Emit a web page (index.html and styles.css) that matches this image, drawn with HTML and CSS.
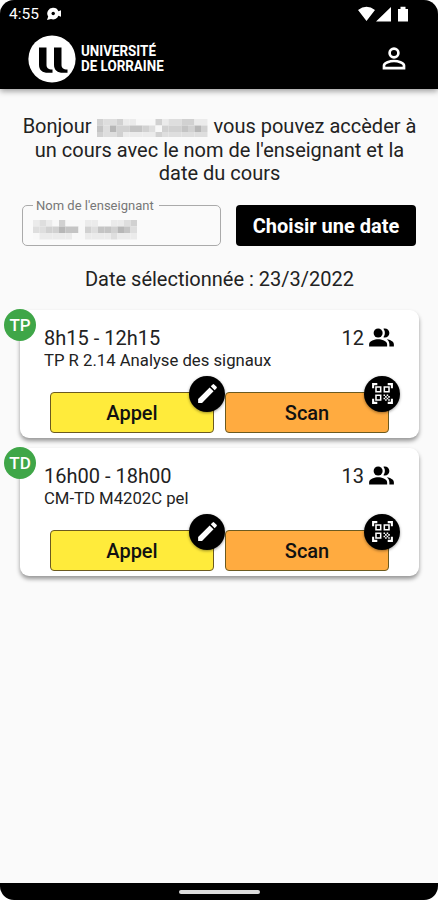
FILE: index.html
```html
<!DOCTYPE html>
<html lang="fr">
<head>
  <meta charset="UTF-8" />
  <meta name="viewport" content="width=device-width, initial-scale=1.0" />
  <title>Université de Lorraine</title>
  <link rel="stylesheet" href="styles.css">
</head>
<body>
  <!-- shared icons -->
  <svg class="defs" width="0" height="0">
    <symbol id="group" viewBox="0 0 24 24">
      <circle cx="9" cy="8" r="4"/>
      <path d="M9 13.500c-3 0-8 1.300-8 4.500v2h16v-2c0-3.200-5-4.500-8-4.500zM15 12c2.200 0 4-1.800 4-4s-1.800-4-4-4c-.5 0-.9.100-1.300.200A6 6 0 0 1 15 8a6 6 0 0 1-1.300 3.800c.4.100.8.200 1.300.200zM16.700 13.600C18 14.600 19 16 19 18v2h4v-2c0-2.500-3.300-3.900-6.300-4.400z"/>
    </symbol>
    <symbol id="edit" viewBox="0 0 24 24">
      <path d="M3 17.250V21h3.750L17.810 9.940l-3.750-3.750L3 17.250zM20.710 7.040a1 1 0 0 0 0-1.410l-2.340-2.340a1 1 0 0 0-1.410 0l-1.830 1.830 3.750 3.750 1.830-1.830z"/>
    </symbol>
    <symbol id="qr" viewBox="0 0 24 24">
      <path d="M9.500 6.500v3h-3v-3h3M11 5H5v6h6V5zM9.500 14.500v3h-3v-3h3M11 13H5v6h6v-6zM17.500 6.500v3h-3v-3h3M19 5h-6v6h6V5zM13 13h1.500v1.500H13V13zM14.500 14.500H16V16h-1.500v-1.500zM16 13h1.500v1.500H16V13zM13 16h1.500v1.500H13V16zM14.500 17.500H16V19h-1.500v-1.500zM16 16h1.500v1.500H16V16zM17.500 14.500H19V16h-1.500v-1.500zM17.500 17.500H19V19h-1.500v-1.500zM22 7h-2V4h-3V2h5v5zM22 22v-5h-2v3h-3v2h5zM2 22h5v-2H4v-3H2v5zM2 2v5h2V4h3V2H2z"/>
    </symbol>
  </svg>

  <div class="phone">
    <header class="header">
      <div class="status">
        <span>4:55</span>
        <svg class="notif" width="17" height="14" viewBox="0 0 17 14">
          <path d="M7 .8a5.600 5.600 0 0 1 5.400 3.400l2.600-1v6.600l-2.600-1A5.600 5.600 0 0 1 5 12l-4 1 1.200-3.500A5.600 5.600 0 0 1 7 .8z" fill="#fff"/>
          <circle cx="7.200" cy="6.500" r="1.700"/>
        </svg>
        <svg class="signals" width="52" height="17" viewBox="0 0 52 17">
          <path d="M0 4Q8.500-2.500 17 4L8.500 15zM18 15.500L33 1v14.500zM40 3h2.500V.8h5V3H50v12.500H40z" fill="#fff"/>
        </svg>
      </div>
      <div class="toolbar">
        <svg class="logo" width="48" height="48" viewBox="0 0 48 48">
          <circle cx="24" cy="24" r="23.600" fill="#fff"/>
          <path d="M11 12.500h7.500v17c0 3.500 1.500 5 6 5v3.200h-4.500c-5.500 0-9-2.500-9-8zM26 12.500h7.500v17c0 3.500 1.500 5 6 5v3.200H35c-5.500 0-9-2.500-9-8z"/>
        </svg>
        <div class="brand"><span>UNIVERSITÉ</span><span>DE LORRAINE</span></div>
        <svg class="user" width="32" height="32" viewBox="0 0 24 24" fill="none" stroke="#fff" stroke-width="2">
          <circle cx="12" cy="7.500" r="3.300"/>
          <path d="M4.500 18.900v-2c0-2 4.500-3.400 7.500-3.400s7.500 1.400 7.500 3.400v2z"/>
        </svg>
      </div>
    </header>

    <main>
      <p class="intro">Bonjour <svg class="masked" id="name" width="112" height="18"></svg> vous pouvez accèder à<br>un cours avec le nom de l'enseignant et la<br>date du cours</p>

      <div class="search">
        <fieldset class="field">
          <legend>Nom de l'enseignant</legend>
          <svg class="value" id="teacher" width="105" height="20"></svg>
        </fieldset>
        <button class="date-btn">Choisir une date</button>
      </div>

      <p class="selected">Date sélectionnée : 23/3/2022</p>

      <section class="card">
        <span class="tag">TP</span>
        <div class="info">
          <span class="hours">8h15 - 12h15</span>
          <span class="count">12 <svg class="group"><use href="#group"/></svg></span>
        </div>
        <div class="course">TP R 2.14 Analyse des signaux</div>
        <div class="actions">
          <button class="action appel">Appel<span class="round"><svg><use href="#edit"/></svg></span></button>
          <button class="action scan">Scan<span class="round"><svg><use href="#qr"/></svg></span></button>
        </div>
      </section>

      <section class="card">
        <span class="tag">TD</span>
        <div class="info">
          <span class="hours">16h00 - 18h00</span>
          <span class="count">13 <svg class="group"><use href="#group"/></svg></span>
        </div>
        <div class="course">CM-TD M4202C pel</div>
        <div class="actions">
          <button class="action appel">Appel<span class="round"><svg><use href="#edit"/></svg></span></button>
          <button class="action scan">Scan<span class="round"><svg><use href="#qr"/></svg></span></button>
        </div>
      </section>
    </main>

    <footer class="navbar"><div class="handle"></div></footer>
  </div>

  <script src="script.js"></script>
</body>
</html>
```

FILE: styles.css
```css
* {
  box-sizing: border-box;
}
body {
  margin: 0;
  background: #fff;
  font-family: Roboto, "Liberation Sans", sans-serif;
  color: #222;
}
.defs {
  position: absolute;
}
.phone {
  display: flex;
  flex-direction: column;
  height: 900px;
  background: #fafafa;
  border-radius: 14px;
  overflow: hidden;
}
.header {
  height: 89px;
  background: #000;
  color: #fff;
  box-shadow: 0 2px 6px rgba(0, 0, 0, 0.4);
}
.status {
  display: flex;
  align-items: center;
  height: 28px;
  padding: 0 28px 0 9px;
  font-size: 15.500px;
}
.notif {
  margin-left: 7px;
}
.signals {
  margin-left: auto;
}
.toolbar {
  display: flex;
  align-items: center;
  height: 61px;
  padding: 0 28px 0 28px;
}
.brand {
  display: flex;
  flex-direction: column;
  width: 84px;
  margin-left: 5px;
  font-size: 15.500px;
  font-weight: 700;
  line-height: 15px;
  transform: scaleX(0.865);
  transform-origin: left;
  white-space: nowrap;
}
.user {
  margin-left: auto;
}
main {
  flex: 1;
  padding: 26px 19px 0 20px;
}
p {
  margin: 0;
  text-align: center;
  white-space: nowrap;
}
.intro {
  font-size: 20px;
  line-height: 23.500px;
}
.masked {
  vertical-align: -4px;
}
.search {
  display: flex;
  gap: 15px;
  height: 48px;
  margin: 12px 3px 0 2px;
}
.field {
  width: 199px;
  height: 48px;
  margin: 0;
  padding: 0 0 0 10px;
  border: 1px solid #aaa;
  border-radius: 5px;
}
.field legend {
  padding: 0 5px 0 3px;
  font-size: 13px;
  line-height: 15px;
  color: #777;
}
.value {
  display: block;
  margin-top: 7px;
}
.date-btn {
  width: 180px;
  height: 41px;
  margin-top: 7px;
  padding: 2px 0 0;
  border: 0;
  border-radius: 4px;
  background: #000;
  color: #fff;
  font: 700 20px Roboto, sans-serif;
}
.selected {
  margin-top: 21px;
  font-size: 20px;
  line-height: 24px;
}
.card {
  position: relative;
  height: 128px;
  margin-top: 19px;
  padding: 16px 30px 0 24px;
  background: #fff;
  border-radius: 9px;
  box-shadow: 0 3px 4px rgba(0, 0, 0, 0.4);
}
.card + .card {
  margin-top: 10px;
}
.tag {
  position: absolute;
  top: -1px;
  left: -16px;
  width: 32px;
  height: 32px;
  border-radius: 50%;
  background: #3fa648;
  color: #fff;
  font-size: 17px;
  font-weight: 500;
  line-height: 32px;
  text-align: center;
}
.info {
  display: flex;
  justify-content: space-between;
  height: 25px;
  margin-right: -6px;
  font-size: 20px;
  line-height: 25px;
}
.count {
  display: flex;
  gap: 4px;
}
.group {
  width: 27px;
  height: 27px;
  margin-top: -2px;
  fill: #000;
}
.course {
  height: 20px;
  font-size: 16.700px;
  line-height: 20px;
  white-space: nowrap;
}
.actions {
  display: flex;
  gap: 11px;
  margin: 21px 0 0 6px;
}
.action {
  position: relative;
  width: 164px;
  height: 41px;
  padding: 1px 0 0;
  border: 1px solid #6b5a20;
  border-radius: 4px;
  color: #111;
  font: 500 20px Roboto, sans-serif;
}
.appel {
  background: #ffeb3b;
}
.scan {
  background: #ffab40;
}
.round {
  position: absolute;
  top: -17px;
  right: -12px;
  display: flex;
  align-items: center;
  justify-content: center;
  width: 36px;
  height: 36px;
  border-radius: 50%;
  background: #000;
  box-shadow: 0 1px 3px rgba(0, 0, 0, 0.4);
}
.round svg {
  width: 25px;
  height: 25px;
  fill: #fff;
}
.navbar {
  display: flex;
  justify-content: center;
  height: 17px;
  padding-top: 7px;
  background: #000;
}
.handle {
  width: 81px;
  height: 4px;
  border-radius: 2px;
  background: #ddd;
}
```

FILE: script.js
```js
// draws a masked name as grey blocks, one digit per block (0 = lightest)
function mask(id, rows, size) {
  const svg = document.getElementById(id);
  rows.forEach((row, y) => {
    [...row].forEach((level, x) => {
      const r = document.createElementNS("http://www.w3.org/2000/svg", "rect");
      const g = 248 - level * 13;
      r.setAttribute("x", x * size);
      r.setAttribute("y", y * size);
      r.setAttribute("width", size);
      r.setAttribute("height", size);
      r.setAttribute("fill", `rgb(${g},${g},${g})`);
      svg.appendChild(r);
    });
  });
}

mask("name", ["32231100031223311", "42533443203334353", "32231111132222222"], 6.5);
mask("teacher", ["1210300011001123", "2233544032443542", "0111110011112111"], 6.5);
```
